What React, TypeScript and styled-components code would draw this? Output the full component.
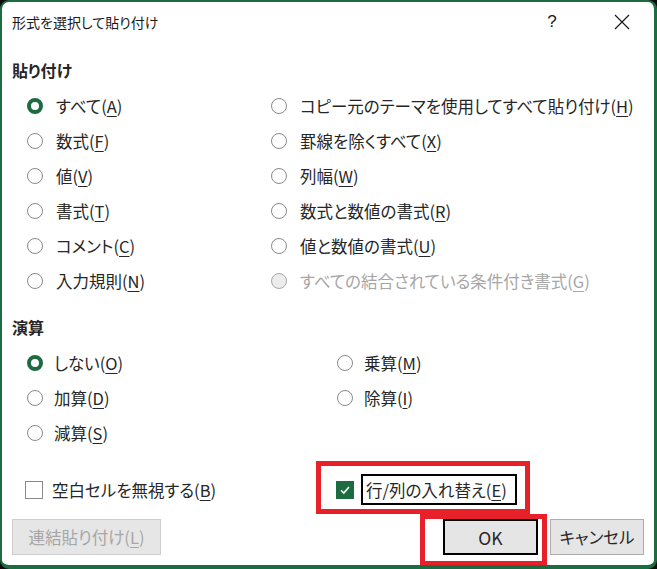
import React from "react";
import styled, { createGlobalStyle } from "styled-components";

const GlobalStyle = createGlobalStyle`
  html, body {
    margin: 0;
    padding: 0;
    background: #0c0c0c;
  }
  body {
    font-family: "Noto Sans CJK JP", "Noto Sans", sans-serif;
    font-feature-settings: "palt";
    color: #262626;
  }
`;

type Choice = { label: string; key: string; checked?: boolean; disabled?: boolean };

const pasteLeft: Choice[] = [
  { label: "すべて", key: "A", checked: true },
  { label: "数式", key: "F" },
  { label: "値", key: "V" },
  { label: "書式", key: "T" },
  { label: "コメント", key: "C" },
  { label: "入力規則", key: "N" },
];

const pasteRight: Choice[] = [
  { label: "コピー元のテーマを使用してすべて貼り付け", key: "H" },
  { label: "罫線を除くすべて", key: "X" },
  { label: "列幅", key: "W" },
  { label: "数式と数値の書式", key: "R" },
  { label: "値と数値の書式", key: "U" },
  { label: "すべての結合されている条件付き書式", key: "G", disabled: true },
];

// grid fills row by row, so interleave left and right
const pasteItems = pasteLeft.flatMap((c, i) => [c, pasteRight[i]]);

const operationItems: (Choice | null)[] = [
  { label: "しない", key: "O", checked: true },
  { label: "乗算", key: "M" },
  { label: "加算", key: "D" },
  { label: "除算", key: "I" },
  { label: "減算", key: "S" },
  null,
];

function Accel({ label, k }: { label: string; k: string }) {
  return (
    <>
      {label}(<Key>{k}</Key>)
    </>
  );
}

function Option({ choice, gap }: { choice: Choice; gap: number }) {
  return (
    <OptionRow $gap={gap} $disabled={choice.disabled}>
      <Radio $checked={choice.checked} $disabled={choice.disabled} />
      <span>
        <Accel label={choice.label} k={choice.key} />
      </span>
    </OptionRow>
  );
}

export default function App() {
  return (
    <>
      <GlobalStyle />
      <Window>
        <TitleBar>
          <Title>形式を選択して貼り付け</Title>
          <HelpButton>?</HelpButton>
          <CloseButton>
            <svg width="16" height="16" viewBox="0 0 16 16">
              <path d="M1 1 L15 15 M15 1 L1 15" stroke="#1a1a1a" strokeWidth="1.2" fill="none" />
            </svg>
          </CloseButton>
        </TitleBar>
        <Body>
          <SectionHeading $top={16}>貼り付け</SectionHeading>
          <OptionGrid $col={244}>
            {pasteItems.map((c) => (
              <Option key={c.key} choice={c} gap={13} />
            ))}
          </OptionGrid>
          <SectionHeading $top={17}>演算</SectionHeading>
          <OptionGrid $col={310}>
            {operationItems.map((c, i) =>
              c ? <Option key={c.key} choice={c} gap={11} /> : <span key={i} />
            )}
          </OptionGrid>
          <CheckRow>
            <CheckItem>
              <CheckBox />
              <CheckText>
                <Accel label="空白セルを無視する" k="B" />
              </CheckText>
            </CheckItem>
            <CheckItem>
              <CheckBox $checked>
                <svg width="12" height="12" viewBox="0 0 12 12">
                  <path d="M2 6.2 L4.8 9 L10 3" stroke="#fff" strokeWidth="1.6" fill="none" />
                </svg>
              </CheckBox>
              <FocusText>
                <Accel label="行/列の入れ替え" k="E" />
              </FocusText>
            </CheckItem>
          </CheckRow>
          <ButtonRow>
            <Button $width={149} disabled>
              <Accel label="連結貼り付け" k="L" />
            </Button>
            <Spacer />
            <Button $width={95} $focused>
              OK
            </Button>
            <Button $width={94}>キャンセル</Button>
          </ButtonRow>
        </Body>
        <Highlight style={{ left: 314, top: 459, width: 214, height: 53 }} />
        <Highlight style={{ left: 418, top: 512, width: 127, height: 52 }} />
      </Window>
    </>
  );
}

const Window = styled.div`
  position: relative;
  box-sizing: border-box;
  width: 657px;
  height: 569px;
  background: #fff;
  border: 2px solid #1d6b41;
  border-right-width: 3px;
  border-bottom-width: 4px;
  border-radius: 9px;
  overflow: hidden;
`;

const TitleBar = styled.div`
  display: flex;
  align-items: center;
  height: 40px;
  padding-left: 10px;
`;

const Title = styled.div`
  flex: 1;
  font-size: 14px;
  color: #1a1a1a;
`;

const HelpButton = styled.div`
  width: 20px;
  text-align: center;
  font-size: 17px;
  font-family: "Liberation Sans", sans-serif;
  color: #1a1a1a;
  margin-right: 52px;
`;

const CloseButton = styled.div`
  display: flex;
  margin-right: 24px;
`;

const Body = styled.div`
  padding: 0 10px;
`;

const SectionHeading = styled.div<{ $top: number }>`
  margin-top: ${(p) => p.$top}px;
  margin-bottom: 6px;
  height: 24px;
  line-height: 24px;
  font-size: 16px;
  font-weight: 700;
`;

const OptionGrid = styled.div<{ $col: number }>`
  display: grid;
  grid-template-columns: ${(p) => p.$col}px 1fr;
  grid-auto-rows: 35px;
  padding-left: 15px;
`;

const OptionRow = styled.div<{ $gap: number; $disabled?: boolean }>`
  display: flex;
  align-items: center;
  gap: ${(p) => p.$gap}px;
  font-size: 16.5px;
  white-space: nowrap;
  color: ${(p) => (p.$disabled ? "#a6a6a6" : "#262626")};
`;

const Radio = styled.span<{ $checked?: boolean; $disabled?: boolean }>`
  box-sizing: border-box;
  width: 16px;
  height: 16px;
  flex: none;
  border-radius: 50%;
  border: ${(p) =>
    p.$checked ? "4.5px solid #1d6b41" : p.$disabled ? "1.5px solid #a8a8a8" : "1.5px solid #8a8a8a"};
  background: ${(p) => (p.$disabled ? "#ececec" : "#fff")};
`;

const Key = styled.span`
  text-decoration: underline;
  text-underline-offset: 3px;
  text-decoration-thickness: 1px;
`;

const CheckRow = styled.div`
  display: grid;
  grid-template-columns: 311px 1fr;
  height: 30px;
  margin-top: 24px;
  padding-left: 13px;
`;

const CheckItem = styled.div`
  display: flex;
  align-items: center;
  gap: 7px;
  font-size: 16.5px;
  white-space: nowrap;
`;

const CheckBox = styled.span<{ $checked?: boolean }>`
  box-sizing: border-box;
  width: 18px;
  height: 18px;
  flex: none;
  display: flex;
  align-items: center;
  justify-content: center;
  background: ${(p) => (p.$checked ? "#1d6b41" : "#fff")};
  border: ${(p) => (p.$checked ? "none" : "1.5px solid #8a8a8a")};
`;

const CheckText = styled.span`
  margin-left: 2px;
`;

const FocusText = styled.span`
  border: 2px solid #000;
  padding: 2px 8px 1px 3px;
  line-height: 24px;
`;

const ButtonRow = styled.div`
  display: flex;
  gap: 12px;
  margin-top: 15px;
  height: 36px;
`;

const Spacer = styled.div`
  flex: 1;
`;

const Button = styled.button<{ $width: number; $focused?: boolean }>`
  box-sizing: border-box;
  width: ${(p) => p.$width}px;
  height: 36px;
  padding: 0;
  font-family: inherit;
  font-feature-settings: "palt";
  font-size: ${(p) => (p.$focused ? 17.5 : 16.5)}px;
  color: #262626;
  background: #e5e5e5;
  border: ${(p) => (p.$focused ? "2px solid #000" : "1px solid #adadad")};

  &:disabled {
    color: #a6a6a6;
    border-color: #cfcfcf;
    background: #e6e6e6;
  }
`;

const Highlight = styled.div`
  position: absolute;
  box-sizing: border-box;
  border: 5px solid #e8202a;
  pointer-events: none;
`;
